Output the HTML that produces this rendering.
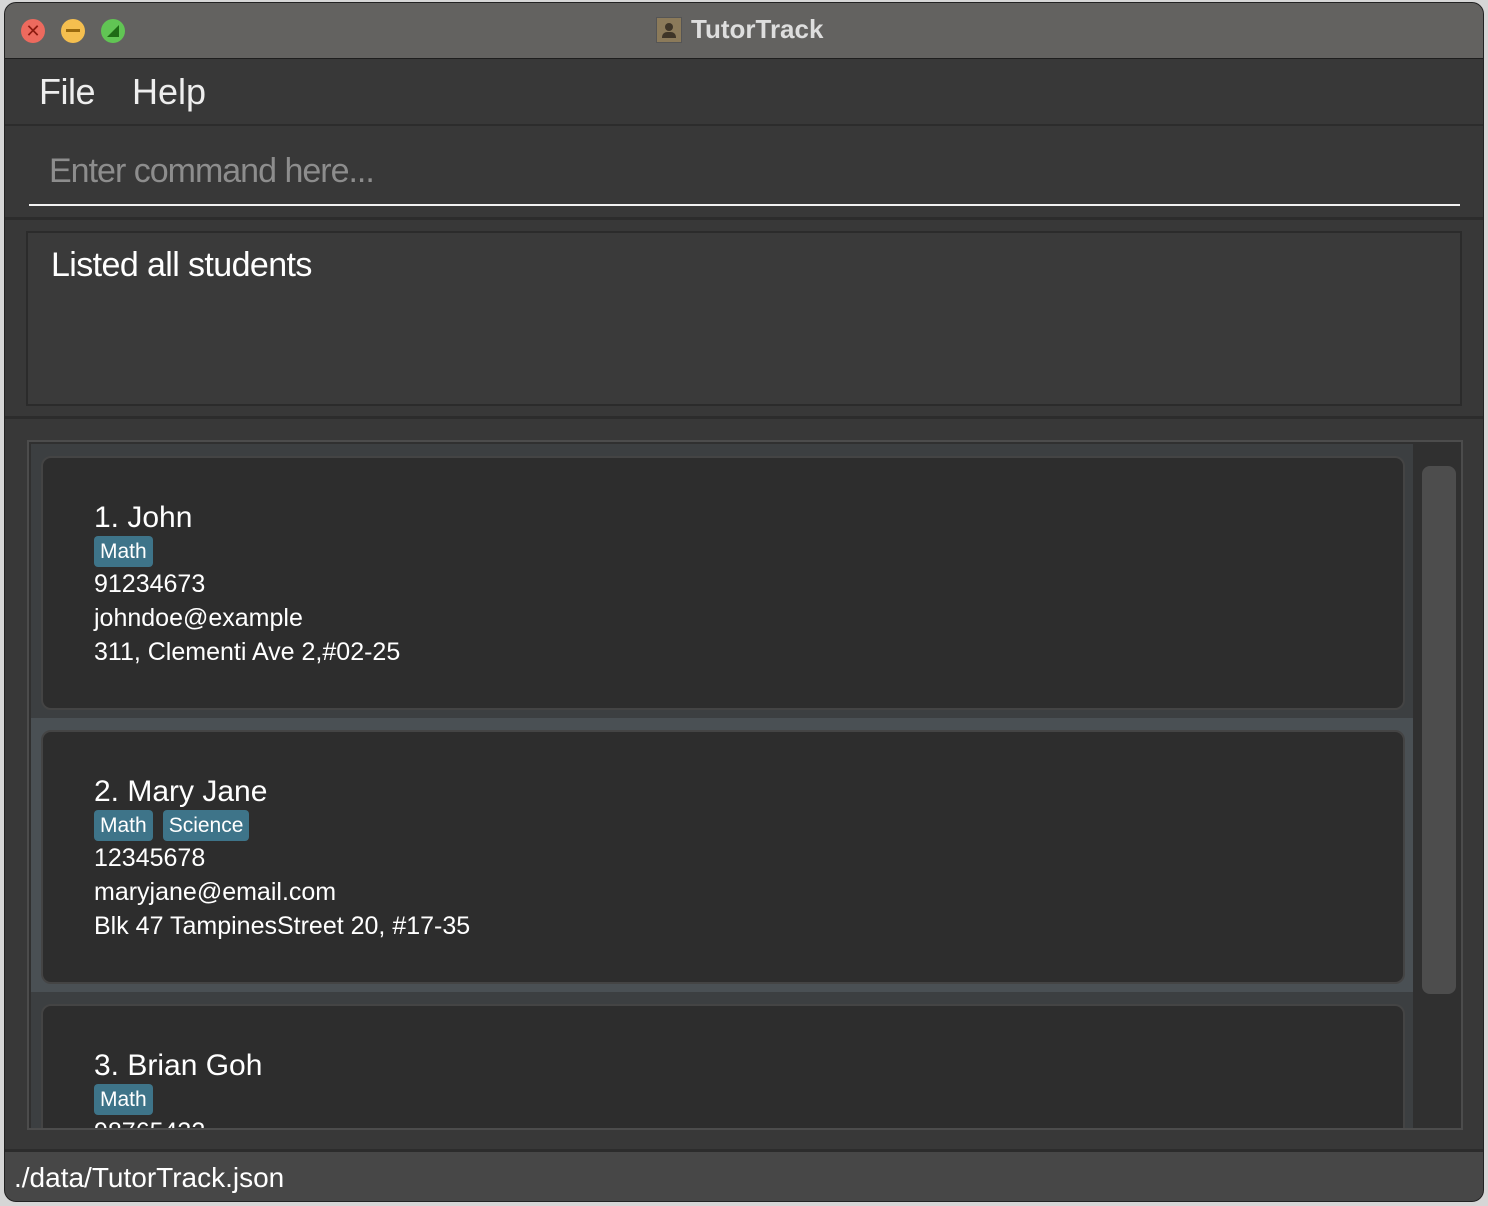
<!DOCTYPE html>
<html><head><meta charset="utf-8"><style>
*{margin:0;padding:0;box-sizing:border-box}
html,body{width:1488px;height:1206px;overflow:hidden}
body{background:#d6d6d6;position:relative;font-family:"Liberation Sans",sans-serif;color:#fff}
.a{position:absolute}
.win{left:4px;top:2px;width:1480px;height:1200px;background:#383838;border-radius:12px;overflow:hidden;border:1px solid #222}
.tb{left:0;top:0;width:1480px;height:56px;background:#636260;border-bottom:1px solid #1e1e1e}
.dot{width:24px;height:24px;border-radius:50%;top:16px}
.tag{display:inline-block;background:#3e7489;border-radius:4px;font-size:21px;padding:2px 6px;margin-right:10px;height:31px;line-height:27px}
.card{left:12px;width:1364px;background:#2d2d2d;border:2px solid #444;border-radius:10px}
.card .in{position:absolute;left:51px;top:42px}
.nm{font-size:30px;line-height:36px}
.ln{font-size:25px;line-height:34px}
</style></head><body>
<div class="a win">
 <div class="a tb">
  <div class="a dot" style="left:16px;background:#ed6a5e;color:#8c1a10;font-size:18px;line-height:24px;text-align:center">✕</div>
  <div class="a dot" style="left:56px;background:#f5bf4f"><div class="a" style="left:5px;top:10px;width:14px;height:3px;background:#9a6a0e"></div></div>
  <div class="a dot" style="left:96px;background:#61c554"><div class="a" style="left:6px;top:6px;width:12px;height:12px;background:#1e6b15;clip-path:polygon(0 100%,100% 0,100% 100%)"></div></div>
  <div class="a" style="left:651px;top:14px;width:26px;height:26px;background:#8b7a5a;border:1px solid #555"><div class="a" style="left:8px;top:5px;width:8px;height:8px;border-radius:50%;background:#3e3528"></div><div class="a" style="left:5px;top:14px;width:14px;height:6px;background:#3e3528;border-radius:5px 5px 0 0"></div></div>
  <div class="a" style="left:686px;top:11px;font-size:26px;font-weight:bold;color:#dedede">TutorTrack</div>
 </div>
 <div class="a" style="left:34px;top:68px;font-size:36px;color:#eee;letter-spacing:-0.5px">File</div>
 <div class="a" style="left:127px;top:68px;font-size:36px;color:#eee">Help</div>
 <div class="a" style="left:0;top:121px;width:1480px;height:2px;background:#2c2c2c"></div>
 <div class="a" style="left:44px;top:149px;font-size:34px;color:#8d8d8d;letter-spacing:-1px">Enter command here...</div>
 <div class="a" style="left:24px;top:201px;width:1431px;height:2px;background:#f2f2f2"></div>
 <div class="a" style="left:0;top:214px;width:1480px;height:3px;background:#2c2c2c"></div>
 <div class="a" style="left:21px;top:228px;width:1436px;height:175px;background:#3a3a3a;border:2px solid #2b2b2b"></div>
 <div class="a" style="left:46px;top:243px;font-size:34px;color:#fff;letter-spacing:-0.6px">Listed all students</div>
 <div class="a" style="left:0;top:413px;width:1480px;height:3px;background:#2c2c2c"></div>
 <div class="a" style="left:22px;top:437px;width:1436px;height:690px;background:#303030;border:2px solid #4c4c4c;overflow:hidden">
  <div class="a" style="left:2px;top:2px;width:1382px;height:684px;background:#3c3f41"></div>
  <div class="a" style="left:2px;top:276px;width:1382px;height:274px;background:#4a5054"></div>
  <div class="a card" style="top:14px;height:254px"><div class="in">
   <div class="nm">1. John</div>
   <div><span class="tag">Math</span></div>
   <div class="ln">91234673</div><div class="ln">johndoe@example</div><div class="ln">311, Clementi Ave 2,#02-25</div>
  </div></div>
  <div class="a card" style="top:288px;height:254px"><div class="in">
   <div class="nm">2. Mary Jane</div>
   <div><span class="tag">Math</span><span class="tag">Science</span></div>
   <div class="ln">12345678</div><div class="ln">maryjane@email.com</div><div class="ln">Blk 47 TampinesStreet 20, #17-35</div>
  </div></div>
  <div class="a card" style="top:562px;height:254px"><div class="in">
   <div class="nm">3. Brian Goh</div>
   <div><span class="tag">Math</span></div>
   <div class="ln">98765432</div>
  </div></div>
  <div class="a" style="left:1393px;top:24px;width:34px;height:528px;background:#4d4d4d;border-radius:8px"></div>
 </div>
 <div class="a" style="left:0;top:1146px;width:1480px;height:3px;background:#2c2c2c"></div>
 <div class="a" style="left:0;top:1149px;width:1480px;height:51px;background:#474747"></div>
 <div class="a" style="left:9px;top:1159px;font-size:28px;color:#fff;letter-spacing:0">./data/TutorTrack.json</div>
</div>
</body></html>
